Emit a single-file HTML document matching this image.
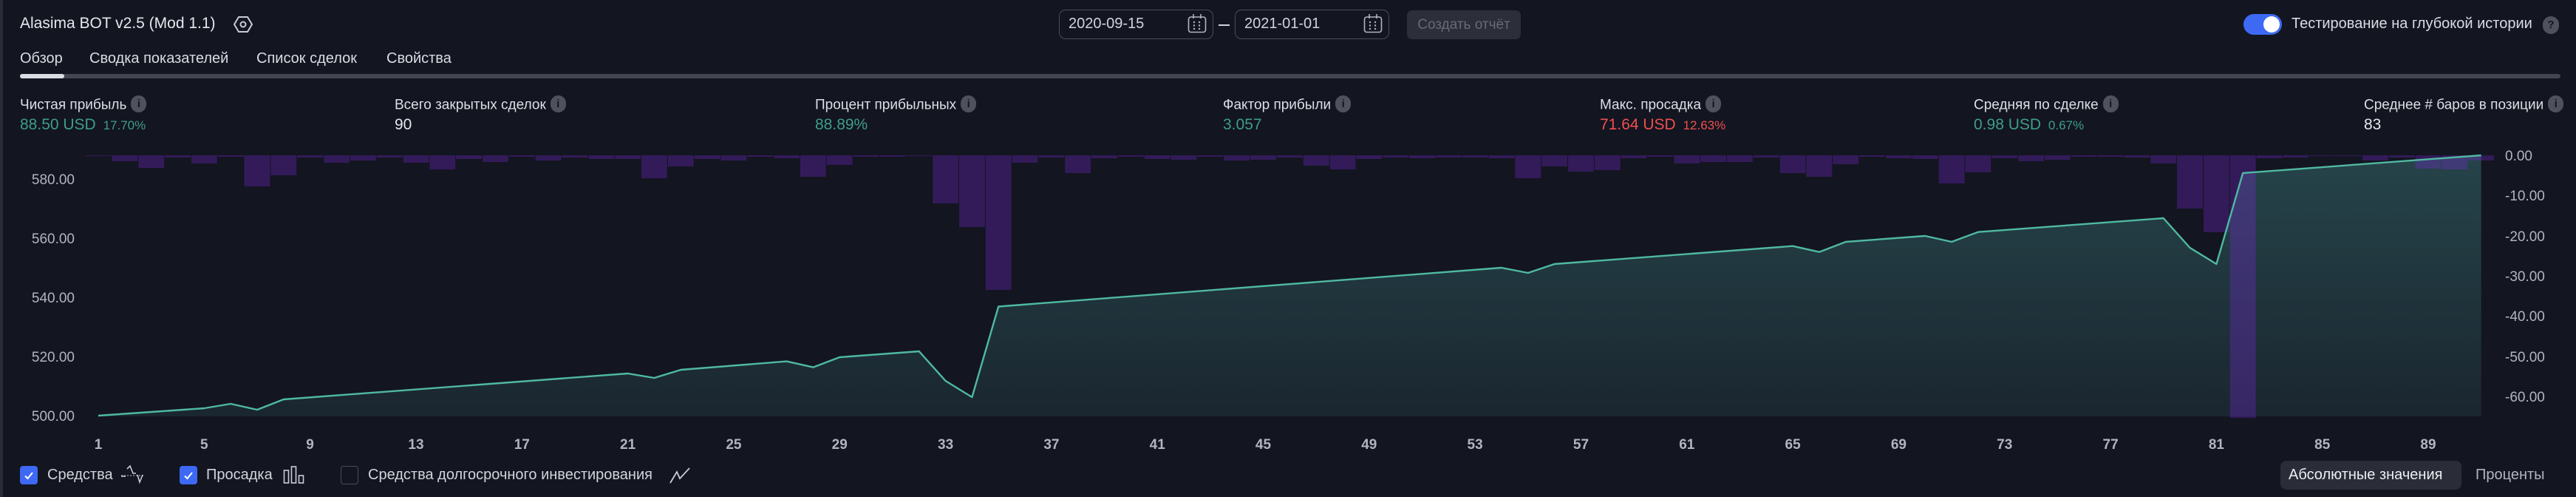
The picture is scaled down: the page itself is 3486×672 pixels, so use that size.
<!DOCTYPE html>
<html><head><meta charset="utf-8">
<style>
*{margin:0;padding:0;box-sizing:border-box}
html,body{width:3486px;height:672px;overflow:hidden;background:#131520;font-family:"Liberation Sans",sans-serif;color:#d1d4dc}
.a{position:absolute;white-space:nowrap}
.lbl{font-size:19px;color:#dcdfe6;top:131px}
.val{font-size:21px;top:157px}
.g{color:#3d9e88}
.r{color:#ef4f4f}
.info{display:inline-block;width:21px;height:23px;border-radius:11px;background:#4f525d;color:#131520;font-weight:bold;font-size:15px;text-align:center;line-height:23px;vertical-align:middle;margin-left:6px;position:relative;top:-2px}
.date{border:1.5px solid #4a4d58;border-radius:9px;height:40px;top:13px;width:209px;font-size:20px;line-height:37px;padding-left:12px;color:#d1d4dc}
.cb{width:24px;height:25px;border-radius:4px;top:630px}
.leg{font-size:20px;top:631px;color:#d1d4dc}
</style></head><body>
<div class="a" style="left:0;top:0;width:4px;height:672px;background:#2a2d38"></div>

<div class="a" style="left:27px;top:20px;font-size:21px;color:#e6e8ee">Alasima BOT v2.5 (Mod 1.1)</div>
<svg class="a" style="left:316px;top:21px" width="26" height="24" viewBox="0 0 26 24"><path d="M7 2 L19 2 L25 12 L19 22 L7 22 L1 12 Z" fill="none" stroke="#c9ccd4" stroke-width="2" stroke-linejoin="round"/><circle cx="13" cy="12" r="3.5" fill="none" stroke="#c9ccd4" stroke-width="2"/></svg>

<div class="a date" style="left:1433px">2020-09-15</div>
<div class="a date" style="left:1671px">2021-01-01</div>
<svg class="a" style="left:1607px;top:18px" width="26" height="27" viewBox="0 0 26 27"><rect x="1.5" y="5" width="23" height="20.5" rx="3" fill="none" stroke="#b2b5be" stroke-width="1.6"/><path d="M8 1v6M18 1v6" stroke="#b2b5be" stroke-width="1.6"/><g fill="#b2b5be"><circle cx="9" cy="12" r="1.2"/><circle cx="16" cy="12" r="1.2"/><circle cx="9" cy="16.5" r="1.2"/><circle cx="16" cy="16.5" r="1.2"/><circle cx="9" cy="21" r="1.2"/><circle cx="16" cy="21" r="1.2"/></g></svg>
<svg class="a" style="left:1845px;top:18px" width="26" height="27" viewBox="0 0 26 27"><rect x="1.5" y="5" width="23" height="20.5" rx="3" fill="none" stroke="#b2b5be" stroke-width="1.6"/><path d="M8 1v6M18 1v6" stroke="#b2b5be" stroke-width="1.6"/><g fill="#b2b5be"><circle cx="9" cy="12" r="1.2"/><circle cx="16" cy="12" r="1.2"/><circle cx="9" cy="16.5" r="1.2"/><circle cx="16" cy="16.5" r="1.2"/><circle cx="9" cy="21" r="1.2"/><circle cx="16" cy="21" r="1.2"/></g></svg>
<div class="a" style="left:1649px;top:33px;width:15px;height:2px;background:#d1d4dc"></div>
<div class="a" style="left:1904px;top:14px;width:154px;height:39px;border-radius:7px;background:#2c2e39;color:#686b76;font-size:19px;line-height:39px;text-align:center">Создать отчёт</div>

<div class="a" style="left:3036px;top:19px;width:52px;height:28px;border-radius:14px;background:#3d69f4"></div>
<div class="a" style="left:3063px;top:22px;width:22px;height:22px;border-radius:11px;background:#fff"></div>
<div class="a" style="left:3101px;top:21px;font-size:20px;color:#d9dce3">Тестирование на глубокой истории</div>
<div class="a" style="left:3441px;top:22px;width:22px;height:24px;border-radius:11px;background:#4f525d;color:#131520;font-weight:bold;font-size:15px;text-align:center;line-height:24px">?</div>

<div class="a" style="left:27px;top:68px;font-size:20px;color:#d9dce3">Обзор</div>
<div class="a" style="left:121px;top:68px;font-size:20px;color:#d9dce3">Сводка показателей</div>
<div class="a" style="left:347px;top:68px;font-size:20px;color:#d9dce3">Список сделок</div>
<div class="a" style="left:523px;top:68px;font-size:20px;color:#d9dce3">Свойства</div>
<div class="a" style="left:27px;top:100px;width:3438px;height:6px;border-radius:3px;background:#434651"></div>
<div class="a" style="left:27px;top:100px;width:60px;height:6px;border-radius:3px;background:#d9dce3"></div>

<div class="a lbl" style="left:27px">Чистая прибыль<span class="info">i</span></div>
<div class="a val g" style="left:27px">88.50 USD <span style="font-size:17px;margin-left:4px">17.70%</span></div>
<div class="a lbl" style="left:534px">Всего закрытых сделок<span class="info">i</span></div>
<div class="a val" style="left:534px;color:#e6e8ee">90</div>
<div class="a lbl" style="left:1103px">Процент прибыльных<span class="info">i</span></div>
<div class="a val g" style="left:1103px">88.89%</div>
<div class="a lbl" style="left:1655px">Фактор прибыли<span class="info">i</span></div>
<div class="a val g" style="left:1655px">3.057</div>
<div class="a lbl" style="left:2165px">Макс. просадка<span class="info">i</span></div>
<div class="a val r" style="left:2165px">71.64 USD <span style="font-size:17px;margin-left:4px">12.63%</span></div>
<div class="a lbl" style="left:2671px">Средняя по сделке<span class="info">i</span></div>
<div class="a val g" style="left:2671px">0.98 USD <span style="font-size:17px;margin-left:4px">0.67%</span></div>
<div class="a lbl" style="left:3199px">Среднее # баров в позиции<span class="info">i</span></div>
<div class="a val" style="left:3199px;color:#e6e8ee">83</div>

<svg class="a" style="left:0;top:0" width="3486" height="672" viewBox="0 0 3486 672">
<defs><linearGradient id="ag" x1="0" y1="210" x2="0" y2="563" gradientUnits="userSpaceOnUse"><stop offset="0" stop-color="#26444a"/><stop offset="1" stop-color="#1a2630"/></linearGradient></defs>
<polygon fill="url(#ag)" points="133,563 133,562 276.3,552 312.2,546 348,554 383.8,540 849.6,505 885.4,511 921.3,500 1064.6,488.6 1100.4,496.6 1136.2,483 1243.7,475 1279.6,515 1315.4,537 1351.2,414.5 2032,362 2067.8,369 2103.6,357 2426.1,332.7 2461.9,340.7 2497.8,327 2605.2,319 2641.1,327 2676.9,313.7 2927.7,295 2963.5,335 2999.4,357 3035.2,234 3357.7,210 3357.7,563"/>
<g fill="rgb(120,40,215)" fill-opacity="0.32">
<rect x="115.6" y="210" width="34.8" height="1"/><rect x="151.4" y="210" width="34.8" height="8"/><rect x="187.3" y="210" width="34.8" height="17"/><rect x="223.1" y="210" width="34.8" height="3"/><rect x="258.9" y="210" width="34.8" height="11"/><rect x="294.8" y="210" width="34.8" height="2"/><rect x="330.6" y="210" width="34.8" height="42"/><rect x="366.4" y="210" width="34.8" height="27"/><rect x="402.2" y="210" width="34.8" height="3"/><rect x="438.1" y="210" width="34.8" height="10"/>
<rect x="473.9" y="210" width="34.8" height="7"/><rect x="509.7" y="210" width="34.8" height="3"/><rect x="545.6" y="210" width="34.8" height="10"/><rect x="581.4" y="210" width="34.8" height="19"/><rect x="617.2" y="210" width="34.8" height="5"/><rect x="653.1" y="210" width="34.8" height="9"/><rect x="688.9" y="210" width="34.8" height="2"/><rect x="724.7" y="210" width="34.8" height="7"/><rect x="760.6" y="210" width="34.8" height="3"/><rect x="796.4" y="210" width="34.8" height="5"/>
<rect x="832.2" y="210" width="34.8" height="5"/><rect x="868" y="210" width="34.8" height="31"/><rect x="903.9" y="210" width="34.8" height="15"/><rect x="939.7" y="210" width="34.8" height="5"/><rect x="975.5" y="210" width="34.8" height="7"/><rect x="1011.4" y="210" width="34.8" height="2"/><rect x="1047.2" y="210" width="34.8" height="4"/><rect x="1083" y="210" width="34.8" height="29"/><rect x="1118.8" y="210" width="34.8" height="13"/><rect x="1154.7" y="210" width="34.8" height="2"/>
<rect x="1190.5" y="210" width="34.8" height="2"/><rect x="1226.3" y="210" width="34.8" height="1"/><rect x="1262.2" y="210" width="34.8" height="65"/><rect x="1298" y="210" width="34.8" height="97"/><rect x="1333.8" y="210" width="34.8" height="182"/><rect x="1369.6" y="210" width="34.8" height="10"/><rect x="1405.5" y="210" width="34.8" height="3"/><rect x="1441.3" y="210" width="34.8" height="24"/><rect x="1477.1" y="210" width="34.8" height="4"/><rect x="1513" y="210" width="34.8" height="2"/>
<rect x="1548.8" y="210" width="34.8" height="5"/><rect x="1584.6" y="210" width="34.8" height="6"/><rect x="1620.5" y="210" width="34.8" height="2"/><rect x="1656.3" y="210" width="34.8" height="7"/><rect x="1692.1" y="210" width="34.8" height="6"/><rect x="1727.9" y="210" width="34.8" height="3"/><rect x="1763.8" y="210" width="34.8" height="14"/><rect x="1799.6" y="210" width="34.8" height="19"/><rect x="1835.4" y="210" width="34.8" height="5"/><rect x="1871.3" y="210" width="34.8" height="3"/>
<rect x="1907.1" y="210" width="34.8" height="4"/><rect x="1942.9" y="210" width="34.8" height="3"/><rect x="1978.7" y="210" width="34.8" height="3"/><rect x="2014.6" y="210" width="34.8" height="4"/><rect x="2050.4" y="210" width="34.8" height="31"/><rect x="2086.2" y="210" width="34.8" height="15"/><rect x="2122.1" y="210" width="34.8" height="22"/><rect x="2157.9" y="210" width="34.8" height="20"/><rect x="2193.7" y="210" width="34.8" height="4"/><rect x="2229.6" y="210" width="34.8" height="2"/>
<rect x="2265.4" y="210" width="34.8" height="11"/><rect x="2301.2" y="210" width="34.8" height="9"/><rect x="2337" y="210" width="34.8" height="9"/><rect x="2372.9" y="210" width="34.8" height="3"/><rect x="2408.7" y="210" width="34.8" height="24"/><rect x="2444.5" y="210" width="34.8" height="29"/><rect x="2480.4" y="210" width="34.8" height="12"/><rect x="2516.2" y="210" width="34.8" height="2"/><rect x="2552" y="210" width="34.8" height="4"/><rect x="2587.8" y="210" width="34.8" height="5"/>
<rect x="2623.7" y="210" width="34.8" height="38"/><rect x="2659.5" y="210" width="34.8" height="23"/><rect x="2695.3" y="210" width="34.8" height="4"/><rect x="2731.2" y="210" width="34.8" height="8"/><rect x="2767" y="210" width="34.8" height="6"/><rect x="2802.8" y="210" width="34.8" height="2"/><rect x="2838.7" y="210" width="34.8" height="2"/><rect x="2874.5" y="210" width="34.8" height="3"/><rect x="2910.3" y="210" width="34.8" height="11"/><rect x="2946.1" y="210" width="34.8" height="72"/>
<rect x="2982" y="210" width="34.8" height="104"/><rect x="3017.8" y="210" width="34.8" height="355"/><rect x="3053.6" y="210" width="34.8" height="4"/><rect x="3089.5" y="210" width="34.8" height="3"/><rect x="3125.3" y="210" width="34.8" height="1"/><rect x="3161.1" y="210" width="34.8" height="1"/><rect x="3197" y="210" width="34.8" height="7"/><rect x="3232.8" y="210" width="34.8" height="3"/><rect x="3268.6" y="210" width="34.8" height="18"/><rect x="3304.4" y="210" width="34.8" height="19"/><rect x="3340.3" y="210" width="34.8" height="7"/>
</g>
<polyline fill="none" stroke="#4fb9a2" stroke-width="2.4" stroke-linejoin="round" points="133,562 276.3,552 312.2,546 348,554 383.8,540 849.6,505 885.4,511 921.3,500 1064.6,488.6 1100.4,496.6 1136.2,483 1243.7,475 1279.6,515 1315.4,537 1351.2,414.5 2032,362 2067.8,369 2103.6,357 2426.1,332.7 2461.9,340.7 2497.8,327 2605.2,319 2641.1,327 2676.9,313.7 2927.7,295 2963.5,335 2999.4,357 3035.2,234 3357.7,210"/>
<g font-family="Liberation Sans, sans-serif" font-size="19" fill="#b2b5be" text-anchor="end">
<text x="101" y="249">580.00</text><text x="101" y="329">560.00</text><text x="101" y="409">540.00</text><text x="101" y="489">520.00</text><text x="101" y="569">500.00</text>
</g>
<g font-family="Liberation Sans, sans-serif" font-size="19" fill="#b2b5be">
<text x="3390" y="217">0.00</text><text x="3390" y="271">-10.00</text><text x="3390" y="326">-20.00</text><text x="3390" y="380">-30.00</text><text x="3390" y="434">-40.00</text><text x="3390" y="489">-50.00</text><text x="3390" y="543">-60.00</text>
</g>
<g font-family="Liberation Sans, sans-serif" font-size="19" font-weight="bold" fill="#b2b5be" text-anchor="middle">
<text x="133" y="607">1</text><text x="276.3" y="607">5</text><text x="419.6" y="607">9</text><text x="563" y="607">13</text><text x="706.3" y="607">17</text><text x="849.6" y="607">21</text><text x="992.9" y="607">25</text><text x="1136.2" y="607">29</text><text x="1279.6" y="607">33</text><text x="1422.9" y="607">37</text><text x="1566.2" y="607">41</text><text x="1709.5" y="607">45</text><text x="1852.8" y="607">49</text><text x="1996.1" y="607">53</text><text x="2139.5" y="607">57</text><text x="2282.8" y="607">61</text><text x="2426.1" y="607">65</text><text x="2569.4" y="607">69</text><text x="2712.7" y="607">73</text><text x="2856.1" y="607">77</text><text x="2999.4" y="607">81</text><text x="3142.7" y="607">85</text><text x="3286" y="607">89</text>
</g>
</svg>

<div class="a cb" style="left:27px;background:#3d69f4"></div>
<svg class="a" style="left:31px;top:635px" width="16" height="16" viewBox="0 0 16 16"><path d="M3 8.5 L6.5 12 L13 4" fill="none" stroke="#fff" stroke-width="2"/></svg>
<div class="a leg" style="left:64px">Средства</div>
<svg class="a" style="left:162px;top:628px" width="34" height="28" viewBox="0 0 34 28"><path d="M2 16 L8 16 M10 6 L14 2 L18 12 L22 12 M24 14 L27 24 L31 14" fill="none" stroke="#c9ccd4" stroke-width="1.6"/><path d="M2 15 L32 15" stroke="#c9ccd4" stroke-width="1" stroke-dasharray="2 2"/></svg>
<div class="a cb" style="left:243px;background:#3d69f4"></div>
<svg class="a" style="left:247px;top:635px" width="16" height="16" viewBox="0 0 16 16"><path d="M3 8.5 L6.5 12 L13 4" fill="none" stroke="#fff" stroke-width="2"/></svg>
<div class="a leg" style="left:279px">Просадка</div>
<svg class="a" style="left:383px;top:629px" width="30" height="26" viewBox="0 0 30 26"><rect x="1.5" y="7" width="6" height="17" fill="none" stroke="#c9ccd4" stroke-width="1.6"/><rect x="11.5" y="2" width="6" height="22" fill="none" stroke="#c9ccd4" stroke-width="1.6"/><rect x="21.5" y="14" width="6" height="10" fill="none" stroke="#c9ccd4" stroke-width="1.6"/></svg>
<div class="a cb" style="left:461px;border:1.5px solid #4a4d58"></div>
<div class="a leg" style="left:498px">Средства долгосрочного инвестирования</div>
<svg class="a" style="left:905px;top:630px" width="30" height="26" viewBox="0 0 30 26"><path d="M2 23 L11 8 L15 17 L28 3" fill="none" stroke="#c9ccd4" stroke-width="1.8"/></svg>

<div class="a" style="left:3086px;top:623px;width:245px;height:39px;border-radius:8px;background:#2a2c37"></div>
<div class="a" style="left:3097px;top:631px;font-size:20px;color:#eceef2">Абсолютные значения</div>
<div class="a" style="left:3350px;top:631px;font-size:20px;color:#b2b5be">Проценты</div>
</body></html>
